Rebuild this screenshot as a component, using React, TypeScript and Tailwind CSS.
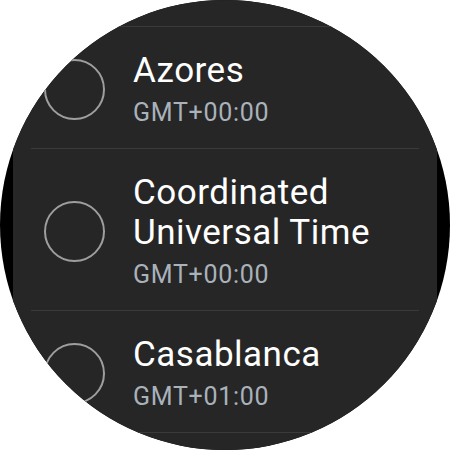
import React from 'react';

const zones = [
  { name: 'Azores', offset: 'GMT+00:00' },
  { name: 'Coordinated Universal Time', offset: 'GMT+00:00' },
  { name: 'Casablanca', offset: 'GMT+01:00' },
];

function Divider() {
  return <div className="mx-[18px] h-px bg-[#3a3a3a]" />;
}

export default function App() {
  return (
    <div className="w-[450px] h-[450px] bg-white" style={{ fontFamily: 'Roboto, "Noto Sans", sans-serif' }}>
      {/* Watch face */}
      <div className="w-[450px] h-[450px] rounded-full bg-black overflow-hidden">
        <div className="mx-[13px] h-full bg-[#262626]">
          {/* tail of the previous row, scrolled off */}
          <div className="h-[26px]" />
          <Divider />
          {zones.map((zone) => (
            <React.Fragment key={zone.name}>
              <div className="flex items-center pl-[31px] pr-[20px] pt-[24px] pb-[20px]">
                <div className="w-[61px] h-[61px] shrink-0 rounded-full border-2 border-[#9e9e9e]" />
                <div className="ml-[28px] flex flex-col">
                  <span className="text-[35px] leading-[40px] tracking-[0.5px] text-white">{zone.name}</span>
                  <span className="mt-[7px] text-[25px] leading-[30px] tracking-[0.7px] text-[#a9b2bb]">{zone.offset}</span>
                </div>
              </div>
              <Divider />
            </React.Fragment>
          ))}
        </div>
      </div>
    </div>
  );
}
